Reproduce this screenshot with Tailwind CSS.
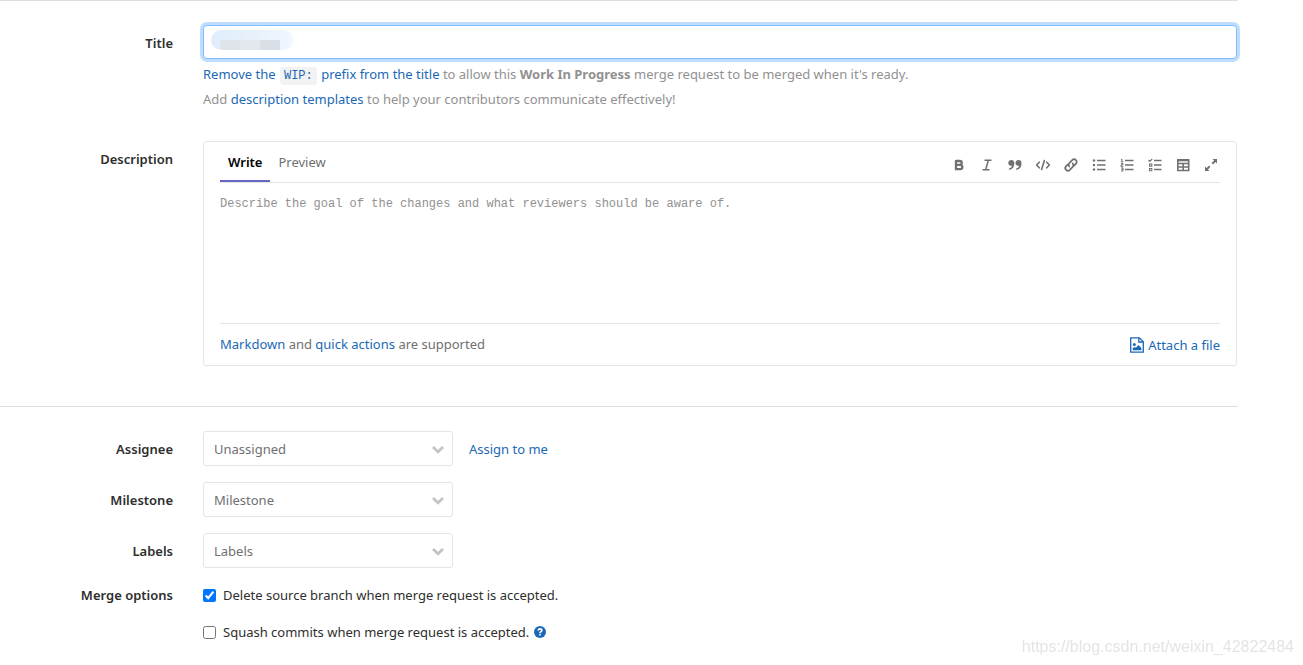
<!DOCTYPE html>
<html lang="en">
<head>
<meta charset="utf-8">
<meta name="viewport" content="width=device-width, initial-scale=1">
<title>New Merge Request</title>
<script src="https://cdn.jsdelivr.net/npm/@tailwindcss/browser@4"></script>
</head>
<body class="bg-white font-['Noto_Sans','Open_Sans',sans-serif] text-[13px] leading-5 text-[#2e2e2e]">
<form class="pr-[65px]">
  <section class="border-t border-[#dfdfdf] pt-6 pb-10">
    <div class="grid grid-cols-[173px_minmax(0,1fr)] gap-x-[30px]">
      <label for="title" class="pt-2 text-right font-semibold">Title</label>
      <div class="mr-px">
        <div class="relative">
          <input id="title" type="text" class="block h-[34px] w-full rounded border border-[#80bdff] bg-white px-2.5 outline-none ring-3 ring-[#bfdeff]">
          <span aria-hidden="true" class="absolute left-2 top-[5px] flex h-5 w-[82px] items-end overflow-hidden rounded-full bg-gradient-to-r from-[#e0edfc] via-[#e8f1fb] to-[#f0f7ff] pl-[9px]">
            <span class="h-2.5 w-5 bg-[#dfe3ea]"></span><span class="h-2.5 w-5 bg-[#e3e7ee]"></span><span class="h-2.5 w-5 bg-[#d9dee7]"></span>
          </span>
        </div>
        <p class="mt-[3px] leading-[25px] text-[#919191]"><a href="#" class="text-[#1b69b6]">Remove the <code class="mx-px rounded bg-[#f2f2f2] px-1 py-0.5 font-['Liberation_Mono',monospace] text-xs">WIP:</code> prefix from the title</a> to allow this <strong class="font-bold">Work In Progress</strong> merge request to be merged when it's ready.</p>
        <p class="leading-[25px] text-[#919191]">Add <a href="#" class="text-[#1b69b6]">description templates</a> to help your contributors communicate effectively!</p>
      </div>
    </div>

    <div class="mt-[29px] grid grid-cols-[173px_minmax(0,1fr)] gap-x-[30px]">
      <label for="description" class="pt-2 text-right font-semibold">Description</label>
      <div class="mr-px rounded-[3px] border border-[#e5e5e5] px-4">
        <div class="flex h-[41px] items-stretch justify-between border-b border-[#e5e5e5]">
          <div class="flex">
            <button type="button" class="border-b-2 border-[#6666c4] px-2 pt-0.5 font-semibold text-black">Write</button>
            <button type="button" class="px-2 text-[#707070]">Preview</button>
          </div>
          <div class="flex items-center gap-3 pt-1.5 pr-px text-[#707070]">
            <button type="button" aria-label="Bold"><svg class="size-4" viewBox="0 0 16 16" fill="none" stroke="currentColor" stroke-width="2.300"><path d="M5 4h3.800a1.900 1.900 0 0 1 0 3.900H5m0 0h4.200a2.100 2.100 0 0 1 0 4.300H5zM5 3v10"/></svg></button>
            <button type="button" aria-label="Italic"><svg class="size-4" viewBox="0 0 16 16" fill="none" stroke="currentColor" stroke-width="1.500"><path d="M5.500 3.200h7M3.500 12.700h7M9.300 3.200l-2.600 9.500"/></svg></button>
            <button type="button" aria-label="Quote"><svg class="size-4" viewBox="0 0 16 16" fill="currentColor"><path d="M4.300 3a2.900 2.900 0 1 0 .6 5.700c-.3 1.300-1.200 2.200-2.400 2.500a.8.8 0 0 0 .4 1.600C5.600 12.200 7.300 9.800 7.300 6.200 7.300 4.200 6 3 4.300 3zm7.200 0a2.900 2.900 0 1 0 .6 5.700c-.3 1.300-1.200 2.200-2.400 2.500a.8.8 0 0 0 .4 1.600c2.700-.6 4.400-3 4.400-6.600 0-2-1.300-3.200-3-3.200z"/></svg></button>
            <button type="button" aria-label="Code"><svg class="size-4" viewBox="0 0 16 16" fill="none" stroke="currentColor" stroke-width="1.600" stroke-linecap="round" stroke-linejoin="round"><path d="M4.300 5.200 1.600 8l2.700 2.800M11.700 5.200 14.400 8l-2.700 2.800M9.400 3.500l-2.800 9"/></svg></button>
            <button type="button" aria-label="Link"><svg class="size-4" viewBox="0 0 16 16" fill="none" stroke="currentColor" stroke-width="1.700" stroke-linecap="round"><path d="M6.300 9.500a2.700 2.700 0 0 1 .2-3.700l2.700-2.700a2.600 2.600 0 0 1 3.700 3.700l-1.500 1.500M9.700 6.500a2.700 2.700 0 0 1-.2 3.700l-2.700 2.700a2.600 2.600 0 0 1-3.700-3.700l1.500-1.500"/></svg></button>
            <button type="button" aria-label="Bulleted list"><svg class="size-4" viewBox="0 0 16 16" fill="currentColor"><circle cx="3" cy="3.500" r="1.200"/><circle cx="3" cy="8" r="1.200"/><circle cx="3" cy="12.500" r="1.200"/><path d="M6 2.700h8.500v1.600H6zM6 7.200h8.500v1.600H6zM6 11.700h8.500v1.600H6z"/></svg></button>
            <button type="button" aria-label="Numbered list"><svg class="size-4" viewBox="0 0 16 16" fill="none" stroke="currentColor"><path stroke-width="1.500" d="M6 3.500h8.500M6 8h8.500M6 12.500h8.500"/><path stroke-width="1" d="M2 2.300h1v2.500m-1.200 0h2.400M2 6.500h2v1.400h-2v1.500h2.300M2 11h2v3h-2m.5-1.500h1.500"/></svg></button>
            <button type="button" aria-label="Task list"><svg class="size-4" viewBox="0 0 16 16" fill="none" stroke="currentColor"><path stroke-width="1.500" d="M7 3.500h7.500M7 8h7.500M7 12.500h7.500"/><path stroke-width="1.100" d="m1.500 3 1.400 1.400L5.300 1.800M2.500 7h2.300v2.200H2.500zM2.500 11.500h2.300v2.200H2.500z"/></svg></button>
            <button type="button" aria-label="Table"><svg class="size-4" viewBox="0 0 16 16" fill="none" stroke="currentColor" stroke-width="1.600"><path d="M2.800 2.700h10.900v10.800H2.800zM2.800 6.500h10.900M2.800 10h10.900M8.200 6v7"/><path stroke-width="2.200" d="M2.800 3.200h10.900"/></svg></button>
            <button type="button" aria-label="Full screen"><svg class="size-4" viewBox="0 0 16 16" fill="currentColor"><path d="M9.500 2H14v4.500l-1.600-1.600-2.500 2.500-1.300-1.300 2.500-2.500zM6.500 14H2V9.500l1.600 1.600 2.500-2.500 1.300 1.300-2.500 2.500z"/></svg></button>
          </div>
        </div>
        <textarea id="description" class="block h-[140px] w-full resize-none pt-[11px] font-['Liberation_Mono',monospace] text-xs leading-5 outline-none placeholder:text-[#919191]" placeholder="Describe the goal of the changes and what reviewers should be aware of."></textarea>
        <div class="flex h-[42px] items-center justify-between border-t border-[#e5e5e5] pb-0.5 text-[#707070]">
          <p><a href="#" class="text-[#1b69b6]">Markdown</a> and <a href="#" class="text-[#1b69b6]">quick actions</a> are supported</p>
          <button type="button" class="flex items-center gap-[3px] pt-0.5 text-[#1b69b6]"><svg class="size-4" viewBox="0 0 16 16" fill="none" stroke="currentColor" stroke-width="1.300"><path d="M1.700.900h8.800l3.800 3.800v10.400H1.700zM9.800 1v4h4"/><circle cx="5.300" cy="7.500" r="1.500" fill="currentColor" stroke="none"/><path d="M3.700 13.300v-2l2-1.400 1.200.9L9.500 8l2.900 3v2.300z" fill="currentColor" stroke="none"/></svg>Attach a file</button>
        </div>
      </div>
    </div>
  </section>

  <section class="border-t border-[#dfdfdf] pt-6">
    <div class="grid grid-cols-[173px_minmax(0,1fr)] gap-x-[30px] gap-y-4">
      <label for="assignee" class="pt-2 text-right font-semibold">Assignee</label>
      <div class="flex items-center gap-4">
        <div class="relative w-[250px]">
          <select id="assignee" class="block h-[35px] w-full appearance-none rounded-[3px] border border-[#e5e5e5] bg-white pr-8 pl-2.5 text-[#707070]"><option>Unassigned</option></select>
          <svg class="pointer-events-none absolute right-2 top-3 h-3 w-3.5" viewBox="0 0 14 12" fill="none" stroke="#c4c4c4" stroke-width="2.800"><path d="m2 4 5 4.800L12 4"/></svg>
        </div>
        <a href="#" class="text-[#1b69b6]">Assign to me</a>
      </div>
      <label for="milestone" class="pt-2 text-right font-semibold">Milestone</label>
      <div class="relative w-[250px]">
        <select id="milestone" class="block h-[35px] w-full appearance-none rounded-[3px] border border-[#e5e5e5] bg-white pr-8 pl-2.5 text-[#707070]"><option>Milestone</option></select>
        <svg class="pointer-events-none absolute right-2 top-3 h-3 w-3.5" viewBox="0 0 14 12" fill="none" stroke="#c4c4c4" stroke-width="2.800"><path d="m2 4 5 4.800L12 4"/></svg>
      </div>
      <label for="labels" class="pt-2 text-right font-semibold">Labels</label>
      <div class="relative w-[250px]">
        <select id="labels" class="block h-[35px] w-full appearance-none rounded-[3px] border border-[#e5e5e5] bg-white pr-8 pl-2.5 text-[#707070]"><option>Labels</option></select>
        <svg class="pointer-events-none absolute right-2 top-3 h-3 w-3.5" viewBox="0 0 14 12" fill="none" stroke="#c4c4c4" stroke-width="2.800"><path d="m2 4 5 4.800L12 4"/></svg>
      </div>
      <span id="merge-options" class="pt-px text-right font-semibold">Merge options</span>
      <div role="group" aria-labelledby="merge-options" class="flex flex-col gap-[17px] pt-px">
        <div class="flex items-center gap-[7px]">
          <input id="delete-branch" type="checkbox" checked class="size-[13px]">
          <label for="delete-branch">Delete source branch when merge request is accepted.</label>
        </div>
        <div class="flex items-center gap-[7px]">
          <input id="squash" type="checkbox" class="size-[13px]">
          <label for="squash">Squash commits when merge request is accepted.</label>
          <a href="#" aria-label="Help" class="-ml-0.5"><svg class="size-3" viewBox="0 0 12 12" fill="none"><circle cx="6" cy="6" r="6" fill="#1b69b6"/><path d="M4.200 4.600C4.300 3.300 5 2.900 6 2.900c1.100 0 1.800.6 1.800 1.500C7.800 5.600 6 5.700 6 7.200" stroke="#fff" stroke-width="1.600"/><path d="M5.200 8h1.600v1.500H5.200z" fill="#fff"/></svg></a>
        </div>
      </div>
    </div>
  </section>
</form>
<div class="fixed right-[9px] bottom-2 font-['Liberation_Sans',sans-serif] text-base leading-5 text-[#e4e4e4]">https://blog.csdn.net/weixin_42822484</div>
</body>
</html>
